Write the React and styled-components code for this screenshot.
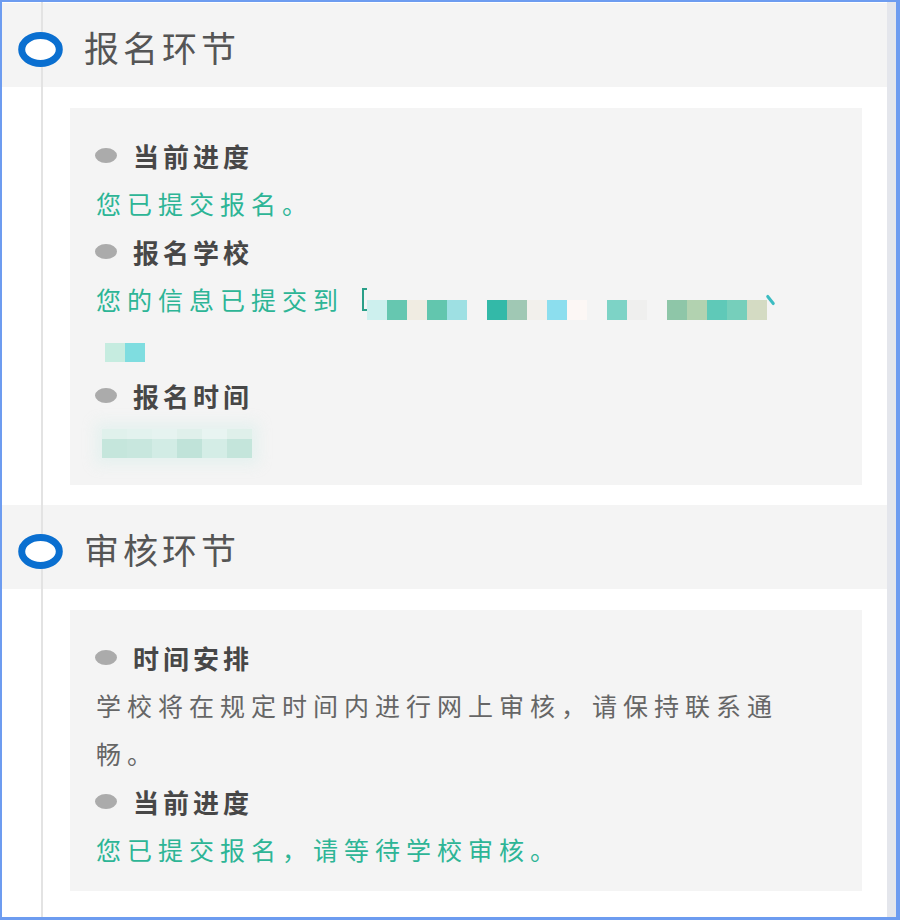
import React from "react";
import styled, { createGlobalStyle } from "styled-components";

const GlobalStyle = createGlobalStyle`
	body {
		margin: 0;
		background: #fff;
		font-family: "Noto Sans CJK SC", "Noto Sans", sans-serif;
	}
`;

const Frame = styled.div`
	width: 900px;
	height: 920px;
	box-sizing: border-box;
	border-style: solid;
	border-color: #6d9cf0;
	border-width: 2px 4px 3px 2px;
	display: flex;
	background: #fff;
`;

const Content = styled.div`
	position: relative;
	flex: 1;
	padding-top: 1px;
	display: flex;
	flex-direction: column;

	&::before {
		content: "";
		position: absolute;
		left: 39px;
		top: 0;
		bottom: 0;
		width: 2px;
		background: #e3e3e3;
		z-index: 1;
	}
`;

const Track = styled.div`
	width: 9px;
	background: #e4e6ec;
`;

const Header = styled.div`
	height: 84px;
	box-sizing: border-box;
	padding: 8px 0 0 16px;
	background: #f4f4f4;
	display: flex;
	align-items: center;
	gap: 21px;
`;

const Ring = styled.svg`
	position: relative;
	z-index: 2;
	flex-shrink: 0;
`;

const HeaderTitle = styled.h2`
	margin: -5px 0 0 0;
	font-size: 35px;
	font-weight: 400;
	letter-spacing: 4px;
	color: #555;
	line-height: 1;
`;

const Card = styled.div`
	margin: 21px 25px 20px 68px;
	padding: 23px 72px 18px 25px;
	background: #f4f4f4;
`;

const Row = styled.div`
	height: 48px;
	display: flex;
	align-items: center;
	white-space: nowrap;
`;

const Bullet = styled.span`
	width: 22px;
	height: 15px;
	border-radius: 50%;
	background: #ababab;
	margin-right: 16px;
	flex-shrink: 0;
`;

const ItemTitle = styled.span`
	font-size: 26px;
	font-weight: 700;
	letter-spacing: 4px;
	color: #474747;
`;

const Text = styled.p`
	margin: 0;
	padding-left: 1px;
	font-size: 25px;
	letter-spacing: 6px;
	line-height: 48px;
	color: ${(p) => (p.green ? "#2db596" : "#666")};
`;

const Bracket = styled.span`
	width: 3px;
	height: 19px;
	margin-left: 18px;
	border: 2px solid #2a9f88;
	border-right: none;
	flex-shrink: 0;
`;

const Mosaic = styled.span`
	display: flex;
	align-self: ${(p) => (p.low ? "flex-end" : "flex-start")};
	margin: ${(p) => (p.low ? "0 0 3px 0" : "20px 0 0 10px")};
`;

const Cell = styled.span`
	width: 20px;
	height: ${(p) => p.h}px;
	background: ${(p) => p.c || "transparent"};
`;

const Tick = styled.span`
	align-self: flex-start;
	width: 3px;
	height: 12px;
	margin: 19px 0 0 2px;
	background: #3cbcc2;
	transform: rotate(-38deg);
	border-radius: 2px;
`;

const Blur = styled.div`
	margin-left: 7px;
	display: grid;
	grid-template-columns: repeat(6, 25px);
	grid-template-rows: 10px 19px;
	filter: blur(0.6px);
	box-shadow: 0 0 14px 6px rgba(222, 240, 236, 0.7);
	background: #e4f2ee;
`;

const BlurCell = styled.span`
	background: ${(p) => p.c};
`;

const schoolCells = [
	"#cdf0ee", "#66c7b0", "#f0ece2", "#62c6ae", "#9ee0e3", null,
	"#33b9a8", "#a0c8b4", "#f2f0ec", "#8cdeee", "#fcf7f5", null,
	"#7dd3c6", "#efefee", null,
	"#8ec6a8", "#b2d2b0", "#5fc9b8", "#76cfbb", "#d4dbc3",
];

const blurTop = ["#e0f1ec", "#e3f2ee", "#e6f3f0", "#e0f0eb", "#e8f4f1", "#dff0ea"];
const blurBottom = ["#c5e6dc", "#c8e7de", "#d2ece5", "#c0e3d9", "#d4ede6", "#c4e5db"];

const StepHeader = ({ title }) => (
	<Header>
		<Ring width="45" height="35" viewBox="0 0 45 35">
			<ellipse cx="22.5" cy="17.5" rx="18.8" ry="14" fill="#fff" stroke="#0a6fd0" strokeWidth="7" />
		</Ring>
		<HeaderTitle>{title}</HeaderTitle>
	</Header>
);

const Item = ({ children }) => (
	<Row>
		<Bullet />
		<ItemTitle>{children}</ItemTitle>
	</Row>
);

export default function App() {
	return (
		<>
			<GlobalStyle />
			<Frame>
				<Content>
					<StepHeader title="报名环节" />
					<Card>
						<Item>当前进度</Item>
						<Text green>您已提交报名。</Text>
						<Item>报名学校</Item>
						<Row>
							<Text green>您的信息已提交到</Text>
							<Bracket />
							<Mosaic low>
								{schoolCells.map((c, i) => (
									<Cell key={i} c={c} h={20} />
								))}
							</Mosaic>
							<Tick />
						</Row>
						<Row>
							<Mosaic>
								<Cell c="#c6ece0" h={19} />
								<Cell c="#7fdde0" h={19} />
							</Mosaic>
						</Row>
						<Item>报名时间</Item>
						<Row>
							<Blur>
								{blurTop.map((c, i) => (
									<BlurCell key={"t" + i} c={c} />
								))}
								{blurBottom.map((c, i) => (
									<BlurCell key={"b" + i} c={c} />
								))}
							</Blur>
						</Row>
					</Card>
					<StepHeader title="审核环节" />
					<Card>
						<Item>时间安排</Item>
						<Text>学校将在规定时间内进行网上审核，请保持联系通畅。</Text>
						<Item>当前进度</Item>
						<Text green>您已提交报名，请等待学校审核。</Text>
					</Card>
				</Content>
				<Track />
			</Frame>
		</>
	);
}
